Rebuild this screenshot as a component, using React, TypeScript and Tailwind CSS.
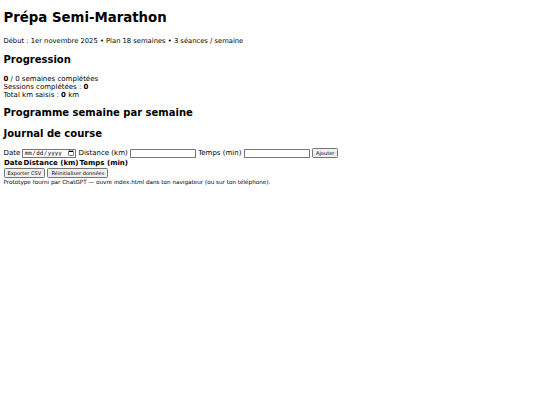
import React from "react";

export default function App() {
  const inputCls =
    "inline-block align-baseline box-border h-[21px] w-[151px] border border-[#767676] rounded-[2px] px-[2px] py-[1px] text-[13.333px] bg-white text-black font-['DejaVu_Sans',sans-serif]";
  const btnCls =
    "inline-block align-baseline box-border border border-[#767676] bg-[#efefef] rounded-[3px] px-[7px] py-[2px] text-[11.6px] text-black font-['DejaVu_Sans',sans-serif] leading-[normal]";
  return (
    <div className="[zoom:0.4375] m-[8px] font-['DejaVu_Sans',sans-serif] text-[16px] leading-[18.6px] text-black">
      <h1 className="text-[30.4px] leading-[37px] font-bold mt-[23.7px] mb-[23.7px]">Prépa Semi-Marathon</h1>
      <p className="my-[16px] text-[15.5px]">Début : 1er novembre 2025 • Plan 18 semaines • 3 séances / semaine</p>
      <h2 className="text-[22.9px] leading-[28px] font-bold my-[19.92px]">Progression</h2>
      <div>
        <b>0</b> / 0 semaines complétées
        <br />
        Sessions complétées : <b>0</b>
        <br />
        Total km saisis : <b>0</b> km
      </div>
      <h2 className="text-[22.9px] leading-[28px] font-bold mt-[17.6px] mb-[19.92px]">Programme semaine par semaine</h2>
      <div></div>
      <h2 className="text-[22.9px] leading-[28px] font-bold mt-[17.6px] mb-[19px]">Journal de course</h2>
      <form onSubmit={(e) => e.preventDefault()}>
        Date{" "}
        <input
          type="date"
          className="inline-block align-baseline box-border h-[21px] w-[123px] border border-[#767676] rounded-[2px] px-[2px] py-[1px] text-[13.333px] bg-white text-black font-['DejaVu_Sans_Mono',monospace]"
        />{" "}
        Distance (km) <input type="text" className={inputCls} /> Temps (min){" "}
        <input type="text" className={inputCls} />{" "}
        <button type="submit" className={btnCls}>
          Ajouter
        </button>
      </form>
      <table className="border-separate border-spacing-[2px] mt-[2px]">
        <thead>
          <tr>
            <th className="p-[1px] font-bold">Date</th>
            <th className="p-[1px] font-bold">Distance (km)</th>
            <th className="p-[1px] font-bold">Temps (min)</th>
          </tr>
        </thead>
        <tbody></tbody>
      </table>
      <div>
        <button className={btnCls}>Exporter CSV</button>{" "}
        <button className={btnCls}>Réinitialiser données</button>
      </div>
      <p className="text-[13px] mt-[1.5px] mb-[4px]">
        Prototype fourni par ChatGPT — ouvre index.html dans ton navigateur (ou sur ton téléphone).
      </p>
    </div>
  );
}
